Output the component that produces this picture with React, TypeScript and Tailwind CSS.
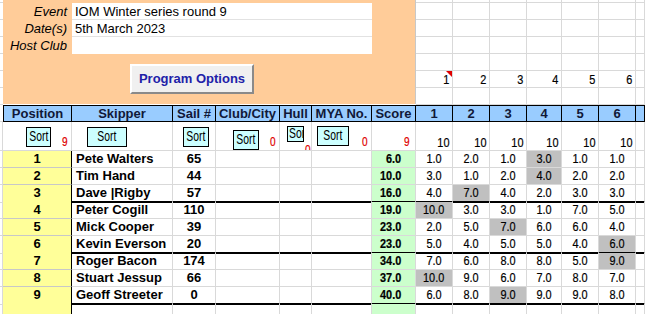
import React from 'react';

type Entry = {
  pos: number;
  name: string;
  sail: number;
  score: string;
  races: string[];
  drop: number;
};

const entries: Entry[] = [
  { pos: 1, name: 'Pete Walters', sail: 65, score: '6.0', races: ['1.0', '2.0', '1.0', '3.0', '1.0', '1.0'], drop: 3 },
  { pos: 2, name: 'Tim Hand', sail: 44, score: '10.0', races: ['3.0', '1.0', '2.0', '4.0', '2.0', '2.0'], drop: 3 },
  { pos: 3, name: 'Dave |Rigby', sail: 57, score: '16.0', races: ['4.0', '7.0', '4.0', '2.0', '3.0', '3.0'], drop: 1 },
  { pos: 4, name: 'Peter Cogill', sail: 110, score: '19.0', races: ['10.0', '3.0', '3.0', '1.0', '7.0', '5.0'], drop: 0 },
  { pos: 5, name: 'Mick Cooper', sail: 39, score: '23.0', races: ['2.0', '5.0', '7.0', '6.0', '6.0', '4.0'], drop: 2 },
  { pos: 6, name: 'Kevin Everson', sail: 20, score: '23.0', races: ['5.0', '4.0', '5.0', '5.0', '4.0', '6.0'], drop: 5 },
  { pos: 7, name: 'Roger Bacon', sail: 174, score: '34.0', races: ['7.0', '6.0', '8.0', '8.0', '5.0', '9.0'], drop: 5 },
  { pos: 8, name: 'Stuart Jessup', sail: 66, score: '37.0', races: ['10.0', '9.0', '6.0', '7.0', '8.0', '7.0'], drop: 0 },
  { pos: 9, name: 'Geoff Streeter', sail: 0, score: '40.0', races: ['6.0', '8.0', '9.0', '9.0', '9.0', '8.0'], drop: 2 },
];

// sheet columns: gutter, Position, Skipper, Sail #, Club/City, Hull, MYA No., Score, races 1-6, spare
const GRID = 'grid grid-cols-[3px_69px_101px_43px_64px_32px_60px_44px_37px_37px_37px_35px_37px_37px_9px]';
const arial = "font-['Liberation_Sans',Arial,sans-serif]";
const cell = 'border-r border-b border-[#d9d9d9]';

const raceWidths = ['w-[37px]', 'w-[37px]', 'w-[37px]', 'w-[35px]', 'w-[37px]', 'w-[37px]', 'w-[9px]'];
const topRows = ['h-[3px]', 'h-[17px]', 'h-[17px]', 'h-[17px]', 'h-[17px]', 'h-[17px]', 'h-[17px]'];

// condensed text, the sheet's numeric columns use a narrow face
function Narrow({ children, right = false }: { children: React.ReactNode; right?: boolean }) {
  return (
    <span
      className={`inline-block scale-x-[0.84] [-webkit-text-stroke:0.2px_currentColor] ${right ? 'origin-right' : 'origin-center'}`}
    >
      {children}
    </span>
  );
}

function SortButton({ className, clipped = false }: { className: string; clipped?: boolean }) {
  return (
    <div
      className={`${className} shrink-0 overflow-hidden whitespace-nowrap bg-[#ccffff] border border-black text-[14px] leading-none flex items-center pb-[2px] text-black ${clipped ? 'justify-start' : 'justify-center'}`}
    >
      <span className={`inline-block scale-x-[0.74] ${clipped ? 'origin-left' : 'origin-center'}`}>Sort</span>
    </div>
  );
}

function Count({ value, className = '' }: { value: string; className?: string }) {
  return (
    <span className={`ml-auto self-end text-[12px] leading-none text-[#e00000] ${className}`}>
      <Narrow right>{value}</Narrow>
    </span>
  );
}

export default function App() {
  return (
    <div className={`${arial} w-[645px] h-[314px] overflow-hidden bg-white text-black text-[13px]`}>
      {/* Event details + program options */}
      <div className="flex h-[105px]">
        <div className="w-[3px] flex flex-col">
          {topRows.map((h, i) => (
            <div key={i} className={`${h} border-b border-[#d9d9d9]`} />
          ))}
        </div>
        <div className="w-[413px] h-[104px] bg-[#ffcc99] border-r border-[#c8c8c8] pt-[3px]">
          {[
            ['Event', 'IOM Winter series round 9'],
            ['Date(s)', '5th March 2023'],
            ['Host Club', ''],
          ].map(([label, value], i) => (
            <div key={label} className="flex h-[17px]">
              <div className="w-[69px] pr-[5px] text-right italic leading-[17px]">{label}</div>
              <div
                className={`w-[300px] bg-white pl-[3px] leading-[17px] ${i < 2 ? 'border-b border-[#e2e2e2]' : ''}`}
              >
                {value}
              </div>
            </div>
          ))}
          <button className="ml-[127px] mt-[10px] w-[124px] h-[30px] bg-[#f0f0f0] border-2 border-t-white border-l-white border-b-[#8a8a8a] border-r-[#8a8a8a] font-bold text-[13px] text-[#2121a8]">
            Program Options
          </button>
        </div>
        <div className="flex-1 flex flex-col">
          {topRows.map((h, r) => (
            <div key={r} className={`flex ${h}`}>
              {raceWidths.map((w, c) => (
                <div
                  key={c}
                  className={`${w} relative border-r border-b border-[#d9d9d9] text-right pr-[3px] leading-[17px]`}
                >
                  {r === 5 && c < 6 ? <Narrow right>{c + 1}</Narrow> : null}
                  {r === 5 && c === 0 && (
                    <span className="absolute top-0 right-0 w-0 h-0 border-l-[6px] border-l-transparent border-t-[6px] border-t-[#e00000]" />
                  )}
                </div>
              ))}
            </div>
          ))}
        </div>
      </div>

      {/* Column headings */}
      <div className={`${GRID} h-[17px] font-bold text-[#101838] leading-[15px]`}>
        <div className="border-b border-[#d9d9d9]" />
        {['Position', 'Skipper', 'Sail #', 'Club/City', 'Hull', 'MYA No.', 'Score', '1', '2', '3', '4', '5', '6', ''].map(
          (h, i) => (
            <div
              key={i}
              className={`bg-[#99ccff] border-y border-r border-black text-center whitespace-nowrap overflow-hidden ${i === 0 ? 'border-l' : ''}`}
            >
              {h}
            </div>
          )
        )}
      </div>

      {/* Sort controls and race counts */}
      <div className={`${GRID} h-[29px]`}>
        <div className={cell} />
        <div className={`${cell} flex`}>
          <SortButton className="ml-[23px] mt-[5px] w-[25px] h-[20px]" />
          <Count value="9" className="mr-[3px] mb-[2px]" />
        </div>
        <div className={`${cell} flex`}>
          <SortButton className="ml-[15px] mt-[5px] w-[40px] h-[20px]" />
        </div>
        <div className={`${cell} flex`}>
          <SortButton className="ml-[10px] mt-[5px] w-[26px] h-[20px]" />
        </div>
        <div className={`${cell} flex`}>
          <SortButton className="ml-[17px] mt-[8px] w-[26px] h-[20px]" />
          <Count value="0" className="mr-[3px] mb-[2px]" />
        </div>
        <div className={`${cell} flex overflow-hidden`}>
          <SortButton className="ml-[7px] mt-[4px] w-[17px] h-[16px] pl-[1px]" clipped />
          <Count value="0" className="mr-[3px] -mb-[6px]" />
        </div>
        <div className={`${cell} flex`}>
          <SortButton className="ml-[5px] mt-[4px] w-[32px] h-[20px]" />
          <Count value="0" className="mr-[3px] mb-[2px]" />
        </div>
        <div className={`${cell} flex`}>
          <Count value="9" className="mr-[5px] mb-[2px]" />
        </div>
        {[0, 1, 2, 3, 4, 5].map((i) => (
          <div key={i} className={`${cell} flex items-end justify-end pr-[3px] pb-[1px] leading-none`}>
            <Narrow right>10</Narrow>
          </div>
        ))}
        <div className={cell} />
      </div>

      {/* Results */}
      {entries.map((e) => {
        const split = e.pos % 3 === 0;
        const line = split ? 'border-r border-r-[#d9d9d9] border-b-2 border-b-black' : cell;
        return (
          <div key={e.pos} className={`${GRID} h-[17px] leading-[16px]`}>
            <div className={cell} />
            <div className="bg-[#ffff99] border-r border-r-black border-b border-b-[#c8c8c8] text-center font-bold">
              {e.pos}
            </div>
            <div className={`${line} pl-[4px] font-bold whitespace-nowrap`}>{e.name}</div>
            <div className={`${line} text-center font-bold`}>{e.sail}</div>
            <div className={line} />
            <div className={line} />
            <div className={line} />
            <div className={`${line} bg-[#ccffcc] font-bold text-right pr-[14px]`}>
              <Narrow right>{e.score}</Narrow>
            </div>
            {e.races.map((r, i) => (
              <div key={i} className={`${line} text-center ${i === e.drop ? 'bg-[#c0c0c0]' : ''}`}>
                <Narrow>{r}</Narrow>
              </div>
            ))}
            <div className={line} />
          </div>
        );
      })}

      {/* next, empty row */}
      <div className={`${GRID} h-[17px]`}>
        <div className={cell} />
        <div className="bg-[#ffff99] border-r border-r-black border-b border-b-[#c8c8c8]" />
        <div className={cell} />
        <div className={cell} />
        <div className={cell} />
        <div className={cell} />
        <div className={cell} />
        <div className={`${cell} bg-[#ccffcc]`} />
        {[0, 1, 2, 3, 4, 5, 6].map((i) => (
          <div key={i} className={cell} />
        ))}
      </div>
    </div>
  );
}
